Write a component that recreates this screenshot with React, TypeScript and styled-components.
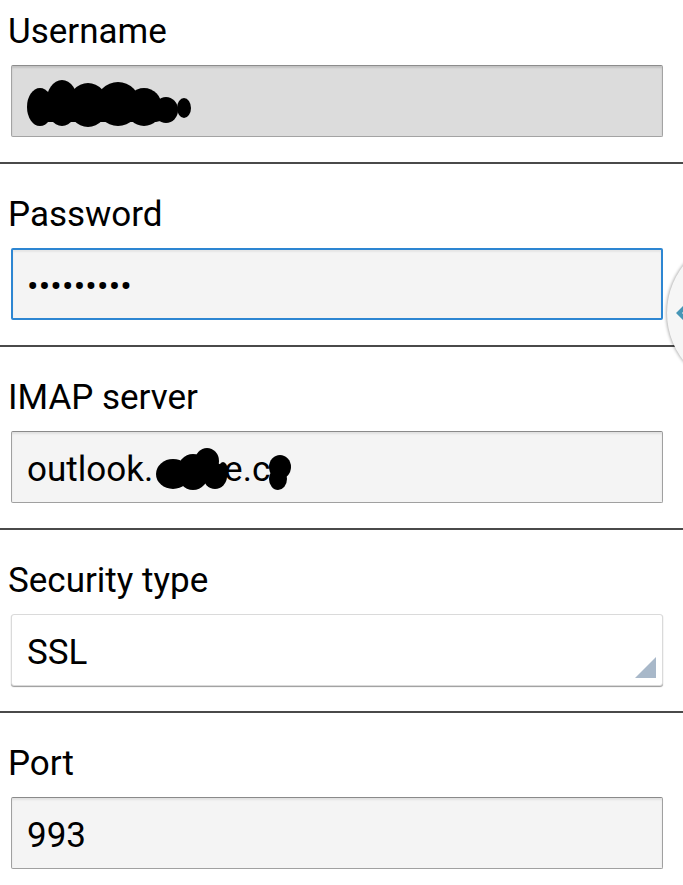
import styled, { createGlobalStyle, css } from 'styled-components';

type Variant = 'disabled' | 'focused' | 'normal' | 'select';

const GlobalStyle = createGlobalStyle`
  html, body {
    margin: 0;
    padding: 0;
    background: #ffffff;
  }
  body {
    font-family: Roboto, 'Liberation Sans', sans-serif;
    overflow: hidden;
  }
`;

const Page = styled.div`
  position: relative;
  width: 683px;
  height: 885px;
  overflow: hidden;
  background: #ffffff;
`;

const Section = styled.section<{ $first?: boolean }>`
  display: flex;
  flex-direction: column;
  padding: ${p => (p.$first ? '12px' : '31px')} 20px 25px 11px;
  border-bottom: 2px solid #4a4a4a;
`;

const Label = styled.div`
  margin-left: -3px;
  font-size: 35px;
  line-height: 40px;
  color: #000000;
`;

const variantStyles = {
  disabled: css`
    background: #dcdcdc;
    border: 1px solid #a3a3a3;
    border-top-color: #8c8c8c;
    box-shadow: inset 0 2px 2px rgba(0, 0, 0, 0.12);
  `,
  focused: css`
    background: #f4f4f4;
    border: 2px solid #2d86d2;
    box-shadow: inset 0 2px 2px rgba(0, 0, 0, 0.06);
  `,
  normal: css`
    background: #f4f4f4;
    border: 1px solid #a0a0a0;
    border-top-color: #8a8a8a;
    box-shadow: inset 0 2px 2px rgba(0, 0, 0, 0.08);
  `,
  select: css`
    background: #ffffff;
    border: 1px solid #dadada;
    border-radius: 3px;
    box-shadow: 0 1px 1px rgba(0, 0, 0, 0.4);
  `,
};

const Field = styled.div<{ $variant: Variant }>`
  box-sizing: border-box;
  display: flex;
  align-items: flex-start;
  margin-top: 13px;
  height: 72px;
  padding: ${p => (p.$variant === 'focused' ? '17px 14px 11px' : '18px 15px 12px')};
  border-radius: 2px;
  font-size: 35px;
  line-height: 40px;
  color: #000000;
  ${p => variantStyles[p.$variant]}
`;

const Value = styled.span`
  display: inline-flex;
  align-items: flex-start;
  flex: 1;
  white-space: nowrap;
`;

const Dots = styled.span`
  margin-top: -1px;
  letter-spacing: 0.2px;
  font-size: 34px;
`;

const Hidden = styled.span<{ $w: number }>`
  display: inline-block;
  position: relative;
  width: ${p => p.$w}px;
  height: 40px;
`;

const Blob = styled.svg`
  position: absolute;
  left: 0;
  top: 0;
  overflow: visible;
`;

const Corner = styled.svg`
  align-self: flex-end;
  margin: 0 -9px -5px 0;
  flex-shrink: 0;
`;

const Handle = styled.div`
  position: absolute;
  left: 667px;
  top: 236px;
  width: 154px;
  height: 154px;
  border-radius: 50%;
  background: #f6f6f6;
  box-shadow: -1px 0 3px rgba(0, 0, 0, 0.3);
  display: flex;
  align-items: center;
`;

const fields: {
  label: string;
  variant: Variant;
  render: () => React.ReactNode;
}[] = [
  {
    label: 'Username',
    variant: 'disabled',
    render: () => (
      <Hidden $w={170}>
        <Blob width="170" height="52" viewBox="0 0 170 52" style={{ top: -6, left: -1 }}>
          <g fill="#000">
            <ellipse cx="14" cy="29" rx="13" ry="19" />
            <ellipse cx="36" cy="25" rx="16" ry="23" />
            <ellipse cx="62" cy="27" rx="20" ry="22" />
            <ellipse cx="92" cy="26" rx="22" ry="22" />
            <ellipse cx="118" cy="29" rx="18" ry="19" />
            <ellipse cx="140" cy="32" rx="12" ry="13" />
            <ellipse cx="158" cy="30" rx="7" ry="10" />
            <rect x="6" y="22" width="134" height="22" rx="10" />
          </g>
        </Blob>
      </Hidden>
    ),
  },
  {
    label: 'Password',
    variant: 'focused',
    render: () => <Dots>•••••••••</Dots>,
  },
  {
    label: 'IMAP server',
    variant: 'normal',
    render: () => (
      <>
        outlook.
        <Hidden $w={71}>
          <Blob width="74" height="46" viewBox="0 0 74 46" style={{ top: -3, left: 0 }}>
            <g fill="#000">
              <ellipse cx="20" cy="27" rx="17" ry="15" />
              <ellipse cx="40" cy="25" rx="16" ry="18" />
              <ellipse cx="54" cy="14" rx="12" ry="13" />
              <ellipse cx="62" cy="29" rx="12" ry="13" />
              <ellipse cx="70" cy="24" rx="5" ry="9" />
            </g>
          </Blob>
        </Hidden>
        e.c
        <Hidden $w={22}>
          <Blob width="26" height="40" viewBox="0 0 26 40" style={{ top: 3, left: -3 }}>
            <g fill="#000">
              <ellipse cx="13" cy="14" rx="11" ry="12" />
              <ellipse cx="11" cy="26" rx="9" ry="11" />
            </g>
          </Blob>
        </Hidden>
      </>
    ),
  },
  {
    label: 'Security type',
    variant: 'select',
    render: () => 'SSL',
  },
  {
    label: 'Port',
    variant: 'normal',
    render: () => '993',
  },
];

export default function App() {
  return (
    <Page>
      <GlobalStyle />
      {fields.map((f, i) => (
        <Section key={f.label} $first={i === 0}>
          <Label>{f.label}</Label>
          <Field $variant={f.variant}>
            <Value>{f.render()}</Value>
            {f.variant === 'select' && (
              <Corner width="21" height="21" viewBox="0 0 21 21">
                <polygon points="21,0 21,21 0,21" fill="#a8b8c9" />
              </Corner>
            )}
          </Field>
        </Section>
      ))}
      <Handle>
        <svg width="12" height="18" viewBox="0 0 12 18" style={{ marginLeft: 9 }}>
          <polygon points="0,9 9,0 12,3 6,9 12,15 9,18" fill="#4796b6" />
        </svg>
      </Handle>
    </Page>
  );
}
